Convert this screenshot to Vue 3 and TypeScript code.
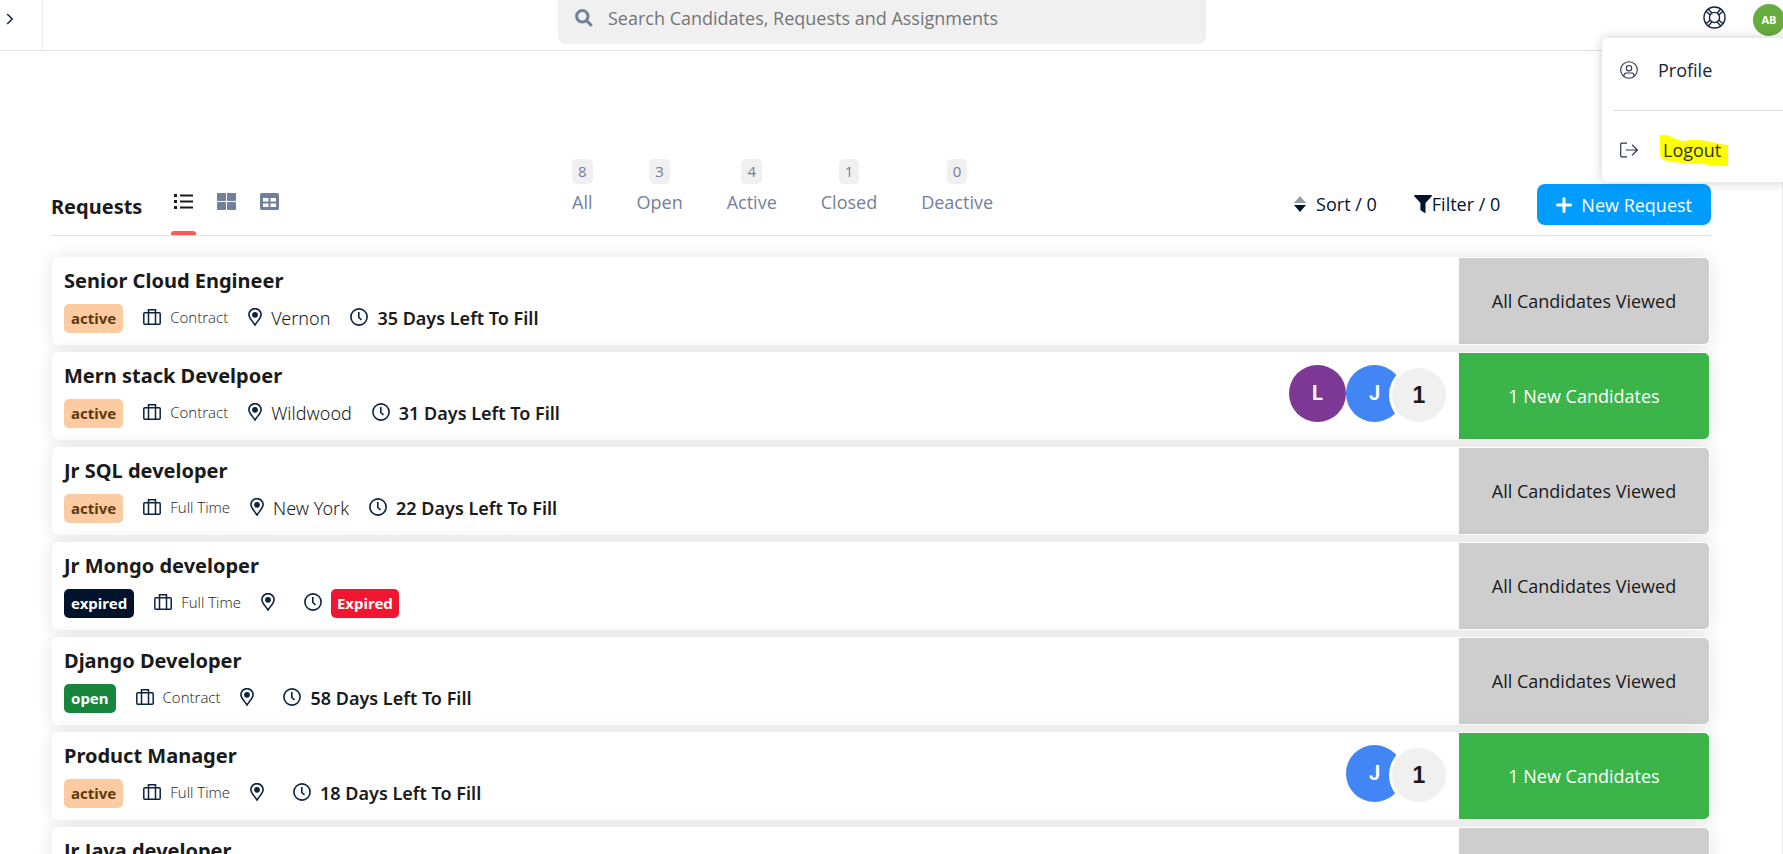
<script setup lang="ts">
import { ref } from 'vue'

type Status = 'active' | 'expired' | 'open'

interface JobRequest {
  title: string
  status: Status
  type: string
  location: string
  daysLeft: number | null
  people: { letter: string; tone: string }[]
  fresh: number
}

const tabs = [
  { label: 'All', count: 8 },
  { label: 'Open', count: 3 },
  { label: 'Active', count: 4 },
  { label: 'Closed', count: 1 },
  { label: 'Deactive', count: 0 },
]

const requests: JobRequest[] = [
  { title: 'Senior Cloud Engineer', status: 'active', type: 'Contract', location: 'Vernon', daysLeft: 35, people: [], fresh: 0 },
  {
    title: 'Mern stack Develpoer', status: 'active', type: 'Contract', location: 'Wildwood', daysLeft: 31,
    people: [{ letter: 'L', tone: 'purple' }, { letter: 'J', tone: 'blue' }], fresh: 1,
  },
  { title: 'Jr SQL developer', status: 'active', type: 'Full Time', location: 'New York', daysLeft: 22, people: [], fresh: 0 },
  { title: 'Jr Mongo developer', status: 'expired', type: 'Full Time', location: '', daysLeft: null, people: [], fresh: 0 },
  { title: 'Django Developer', status: 'open', type: 'Contract', location: '', daysLeft: 58, people: [], fresh: 0 },
  { title: 'Product Manager', status: 'active', type: 'Full Time', location: '', daysLeft: 18, people: [{ letter: 'J', tone: 'blue' }], fresh: 1 },
  { title: 'Jr Java developer', status: 'active', type: 'Full Time', location: '', daysLeft: 18, people: [], fresh: 0 },
]

const query = ref('')
</script>

<template>
  <div class="page">
    <header class="topbar">
      <div class="rail">
        <button class="icon-btn" type="button" aria-label="Expand sidebar">
          <svg width="8" height="12" viewBox="0 0 8 12" fill="none" stroke="#1b2b45" stroke-width="1.6"><path d="M1.2 1l5 5-5 5" /></svg>
        </button>
      </div>
      <label class="search">
        <svg width="18" height="18" viewBox="0 0 18 18" fill="none" stroke="#72809d" stroke-width="3"><circle cx="7.3" cy="7.3" r="5.7" /><path d="M11.5 11.5l5.2 5.4" /></svg>
        <input v-model="query" type="search" placeholder="Search Candidates, Requests and Assignments" aria-label="Search" />
      </label>
      <div class="account">
        <button class="icon-btn" type="button" aria-label="Help">
          <svg width="23" height="23" viewBox="0 0 24 24" fill="none" stroke="#14233c" stroke-width="1.4">
            <circle cx="12" cy="12" r="11" /><circle cx="12" cy="12" r="5.3" />
            <path d="M7.3 9.2L3.2 5.4M9.2 7.3L5.4 3.2M16.7 9.2l4.1-3.8M14.8 7.3l3.8-4.1M7.3 14.8l-4.1 3.8M9.2 16.7l-3.8 4.1M16.7 14.8l4.1 3.8M14.8 16.7l3.8 4.1" />
          </svg>
        </button>
        <button class="me" type="button" aria-label="Account menu">AB</button>
      </div>
    </header>

    <nav class="menu" aria-label="Account">
      <a class="menu-item" href="#profile">
        <svg width="18" height="18" viewBox="0 0 18 18" fill="none" stroke="#26364e" stroke-width="1.1">
          <circle cx="9" cy="9" r="8.3" /><circle cx="9" cy="7.2" r="2.7" /><path d="M4 15.4V14.2q0-2.2 2.2-2.2h5.6q2.2 0 2.2 2.2v1.2" />
        </svg>
        <span>Profile</span>
      </a>
      <hr />
      <a class="menu-item" href="#logout">
        <svg width="18" height="18" viewBox="0 0 18 18" fill="none" stroke="#26364e" stroke-width="1.2">
          <path d="M7 2.2H1.8Q.7 2.2.7 3.3v11.4q0 1.1 1.1 1.1H7M6 9h11.2M12 3.6L17.3 9 12 14.4" />
        </svg>
        <span class="marked">
          <svg class="marker" width="68" height="32" viewBox="0 0 68 32" aria-hidden="true">
            <path d="M0 0h8l3 2 6 2 5 2 10-1h8l12 2 8 2 8 1v21h-11l-9-1-9-2H24l-12-1-9-2-3-4z" fill="#ffff00" />
          </svg>
          <span class="marked-text">Logout</span>
        </span>
      </a>
    </nav>

    <main class="content">
      <div class="toolbar">
        <div class="views">
          <h1>Requests</h1>
          <button class="view current" type="button" aria-label="List view">
            <svg width="19" height="19" viewBox="0 0 19 19" fill="#1a1a1a"><path d="M0 2h3v3H0zM0 8h3v3H0zM0 14h3v3H0zM6 2.5h13v2H6zM6 8.5h13v2H6zM6 14.5h13v2H6z" /></svg>
          </button>
          <button class="view" type="button" aria-label="Grid view">
            <svg width="19" height="19" viewBox="0 0 19 19" fill="#72809d"><rect x="0" y="1" width="9" height="8" rx="1" /><rect x="10" y="1" width="9" height="8" rx="1" /><rect x="0" y="10" width="9" height="8" rx="1" /><rect x="10" y="10" width="9" height="8" rx="1" /></svg>
          </button>
          <button class="view" type="button" aria-label="Table view">
            <svg width="19" height="19" viewBox="0 0 19 19" fill="#72809d" fill-rule="evenodd"><path d="M1.8 1h15.4Q19 1 19 2.6v13.8q0 1.6-1.8 1.6H1.8Q0 18 0 16.4V2.6Q0 1 1.8 1zM3 6v3.5h5.5V6zm7.5 0v3.5H16V6zM3 11.5V15h5.5v-3.5zm7.5 0V15H16v-3.5z" /></svg>
          </button>
        </div>

        <div class="tabs">
          <button v-for="t in tabs" :key="t.label" class="tab" type="button">
            <span class="tab-count">{{ t.count }}</span>
            <span>{{ t.label }}</span>
          </button>
        </div>

        <div class="actions">
          <button class="plain sort" type="button">
            <svg width="12" height="16" viewBox="0 0 12 16"><path d="M6 0l6 7H0z" fill="#949ca8" /><path d="M6 16l6-7H0z" fill="#00132c" /></svg>
            Sort / 0
          </button>
          <button class="plain filter" type="button">
            <svg width="18" height="18" viewBox="0 0 18 18" fill="#00132c"><path d="M.5 0h17q.8.7 0 1.5L11.5 8v9.5q-.5.8-1.2.3L6.8 15.3q-.4-.3-.4-.8V8L.5 1.5Q-.3.7.5 0z" /></svg>
            Filter / 0
          </button>
          <button class="primary" type="button">
            <svg width="16" height="16" viewBox="0 0 16 16" fill="none" stroke="#fff" stroke-width="3" stroke-linecap="round"><path d="M8 1.5v13M1.5 8h13" /></svg>
            New Request
          </button>
        </div>
      </div>

      <section class="list">
        <article v-for="r in requests" :key="r.title" class="card">
          <div class="info">
            <h2>{{ r.title }}</h2>
            <div class="meta">
              <span class="badge" :class="r.status">{{ r.status }}</span>
              <span class="fact">
                <svg width="18" height="18" viewBox="0 0 18 18" fill="none" stroke="#0b2340" stroke-width="1.5"><path d="M1.8 4.8h14.4q1 0 1 1v9.4q0 1-1 1H1.8q-1 0-1-1V5.8q0-1 1-1zM5.5 16V1.8h7V16" /></svg>
                <span class="kind">{{ r.type }}</span>
              </span>
              <span class="fact">
                <svg width="14" height="18" viewBox="0 0 14 18" fill="none" stroke="#0b2340" stroke-width="1.6"><path d="M7 17C4 12.5.9 9.6.9 6.7a6.1 6.1 0 0 1 12.2 0C13.1 9.6 10 12.5 7 17z" /><circle cx="7" cy="6.8" r="2.1" fill="#0b2340" /></svg>
                <span class="place">{{ r.location }}</span>
              </span>
              <span class="fact">
                <svg width="18" height="18" viewBox="0 0 18 18" fill="none" stroke="#0b2340" stroke-width="1.6"><circle cx="9" cy="9" r="8.1" /><path d="M8.8 4v5.5l2.7 2.4" /></svg>
                <strong v-if="r.daysLeft !== null" class="due">{{ r.daysLeft }} Days Left To Fill</strong>
                <span v-else class="badge late">Expired</span>
              </span>
            </div>
          </div>
          <div v-if="r.people.length" class="people">
            <span v-for="p in r.people" :key="p.letter" class="person" :class="p.tone">{{ p.letter }}</span>
            <span class="total">{{ r.fresh }}</span>
          </div>
          <button class="state" :class="{ fresh: r.fresh > 0 }" type="button">
            {{ r.fresh > 0 ? `${r.fresh} New Candidates` : 'All Candidates Viewed' }}
          </button>
        </article>
      </section>
    </main>
  </div>
</template>

<style>
body {
  margin: 0;
  overflow: hidden;
  background: #fff;
}
</style>

<style scoped>
.page {
  position: relative;
  height: 100vh;
  overflow: hidden;
  background: #fff;
  color: #1a1a1a;
  font-family: "Open Sans", "Noto Sans", sans-serif;
  font-size: 18px;
  line-height: 24px;
}
button {
  margin: 0;
  padding: 0;
  border: 0;
  background: none;
  color: inherit;
  font: inherit;
  cursor: pointer;
}
svg {
  display: block;
  flex: none;
}
.topbar {
  display: grid;
  grid-template-columns: 43px 515fr 648fr 577fr;
  height: 50px;
  border-bottom: 1px solid #dedfe0;
}
.rail {
  display: flex;
  align-items: center;
  padding: 0 0 12px 6px;
  border-right: 1px solid #ececec;
}
.search {
  grid-column: 3;
  display: flex;
  align-items: center;
  gap: 15px;
  height: 36px;
  padding: 0 17px 8px;
  border-radius: 0 0 8px 8px;
  background: #f0f0f0;
}
.search input {
  flex: 1;
  min-width: 0;
  padding: 0;
  border: 0;
  outline: 0;
  background: none;
  font: inherit;
}
.search input::placeholder {
  color: #757575;
}
.account {
  display: flex;
  justify-content: flex-end;
  align-items: flex-start;
  gap: 27px;
  margin-right: -2px;
  padding-top: 4px;
}
.account .icon-btn {
  padding-top: 2px;
}
.me {
  width: 32px;
  height: 32px;
  border-radius: 50%;
  background: #67ac3f;
  color: #fff;
  font-size: 11px;
  font-weight: 700;
}
.menu {
  position: absolute;
  z-index: 2;
  top: 38px;
  right: -12px;
  box-sizing: border-box;
  width: 193px;
  padding: 20px 0 20px 12px;
  border-radius: 6px;
  background: #fff;
  box-shadow: 0 0 12px rgba(0, 0, 0, 0.2);
}
.menu-item {
  display: flex;
  align-items: center;
  gap: 20px;
  padding-left: 6px;
  color: #14233c;
  text-decoration: none;
}
.menu hr {
  height: 1px;
  margin: 28px 0 27px;
  border: 0;
  background: #d9dce3;
}
.marked {
  position: relative;
  padding-left: 5px;
}
.marker {
  position: absolute;
  top: -3px;
  left: 2px;
}
.marked-text {
  position: relative;
  color: #2b3500;
}
.content {
  box-sizing: border-box;
  min-height: calc(100vh - 51px);
  padding: 108px 71px 0 51px;
  border-right: 1px solid #ececec;
}
.toolbar {
  display: grid;
  grid-template-columns: 521fr auto 718fr;
  height: 76px;
  border-bottom: 1px solid #dedfe0;
}
.views {
  display: flex;
  align-items: stretch;
}
h1,
h2 {
  font-family: "Noto Sans", "Open Sans", sans-serif;
  font-size: 20px;
  font-weight: 700;
  line-height: 24px;
}
h1 {
  margin: 36px 29px 0 0;
}
.view {
  display: flex;
  box-sizing: border-box;
  width: 25px;
  margin-right: 18px;
  padding: 33px 3px 0;
  align-items: flex-start;
}
.view.current {
  position: relative;
}
.view.current::after {
  content: "";
  position: absolute;
  right: 0;
  bottom: 0;
  left: 0;
  height: 4px;
  border-radius: 3px 3px 0 0;
  background: #ff5a52;
}
.tabs {
  display: flex;
  align-items: flex-start;
  gap: 44px;
  color: #72809d;
}
.tab {
  display: flex;
  flex-direction: column;
  align-items: center;
  gap: 6px;
}
.tab-count {
  padding: 0 6px;
  border-radius: 5px;
  background: #f0f0f0;
  font-size: 15px;
  line-height: 25px;
}
.actions {
  display: flex;
  justify-content: flex-end;
  align-items: center;
  height: 41px;
  padding-top: 25px;
}
.plain {
  display: flex;
  align-items: center;
  padding-bottom: 2px;
  color: #00132c;
}
.sort {
  gap: 10px;
  margin-right: 37px;
}
.filter {
  margin-right: 37px;
}
.primary {
  display: flex;
  align-items: center;
  gap: 9px;
  height: 41px;
  padding: 0 19px;
  border-radius: 8px;
  background: #009dff;
  color: #fff;
  font-weight: 500;
}
.list {
  display: flex;
  flex-direction: column;
  gap: 7px;
  padding: 21px 1px 0;
}
.card {
  display: flex;
  align-items: stretch;
  box-sizing: border-box;
  height: 88px;
  padding: 1px;
  border-radius: 6px;
  background: #fff;
  box-shadow: 0 0 18px rgba(0, 0, 0, 0.1);
}
.info {
  flex: 1;
  padding: 11px;
}
h2 {
  margin: 0;
}
.meta {
  display: flex;
  align-items: center;
  gap: 20px;
  height: 29px;
  margin-top: 11px;
}
.badge {
  padding: 0 7px;
  border-radius: 5px;
  color: #fff;
  font-family: "Noto Sans", "Open Sans", sans-serif;
  font-size: 15px;
  font-weight: 700;
  line-height: 29px;
}
.active {
  background: #fccba2;
  color: #5c3a10;
}
.expired {
  background: #00132c;
}
.open {
  background: #17853b;
}
.late {
  padding: 0 6px;
  background: #f0162f;
}
.fact {
  display: flex;
  align-items: center;
  gap: 9px;
}
.fact svg {
  margin-bottom: 4px;
}
.kind {
  margin-bottom: 3px;
  font-size: 15px;
  font-weight: 300;
}
.place {
  margin-bottom: 2px;
  font-family: "Noto Sans", "Open Sans", sans-serif;
  font-weight: 300;
}
.due {
  margin-bottom: 2px;
  font-family: "Noto Sans", "Open Sans", sans-serif;
  font-weight: 600;
}
.people {
  display: flex;
  align-items: center;
  margin-right: 12px;
  padding-bottom: 2px;
}
.person {
  width: 57px;
  margin-bottom: 3px;
  border-radius: 50%;
  color: #fff;
  font-family: Roboto, sans-serif;
  font-size: 20px;
  font-weight: 700;
  line-height: 57px;
  text-align: center;
}
.purple {
  background: #7d3794;
}
.blue {
  background: #4285f4;
}
.total {
  width: 54px;
  margin-left: -14px;
  border: 3px solid #fff;
  border-right-width: 1px;
  border-radius: 50%;
  background: #f0f0f0;
  font-family: "Liberation Sans", Arial, sans-serif;
  font-size: 23px;
  font-weight: 700;
  line-height: 54px;
  text-align: center;
}
.state {
  width: 250px;
  border-radius: 0 5px 5px 0;
  background: #cecece;
}
.state.fresh {
  background: #3bb54a;
  color: #fff;
  font-weight: 500;
}
</style>
